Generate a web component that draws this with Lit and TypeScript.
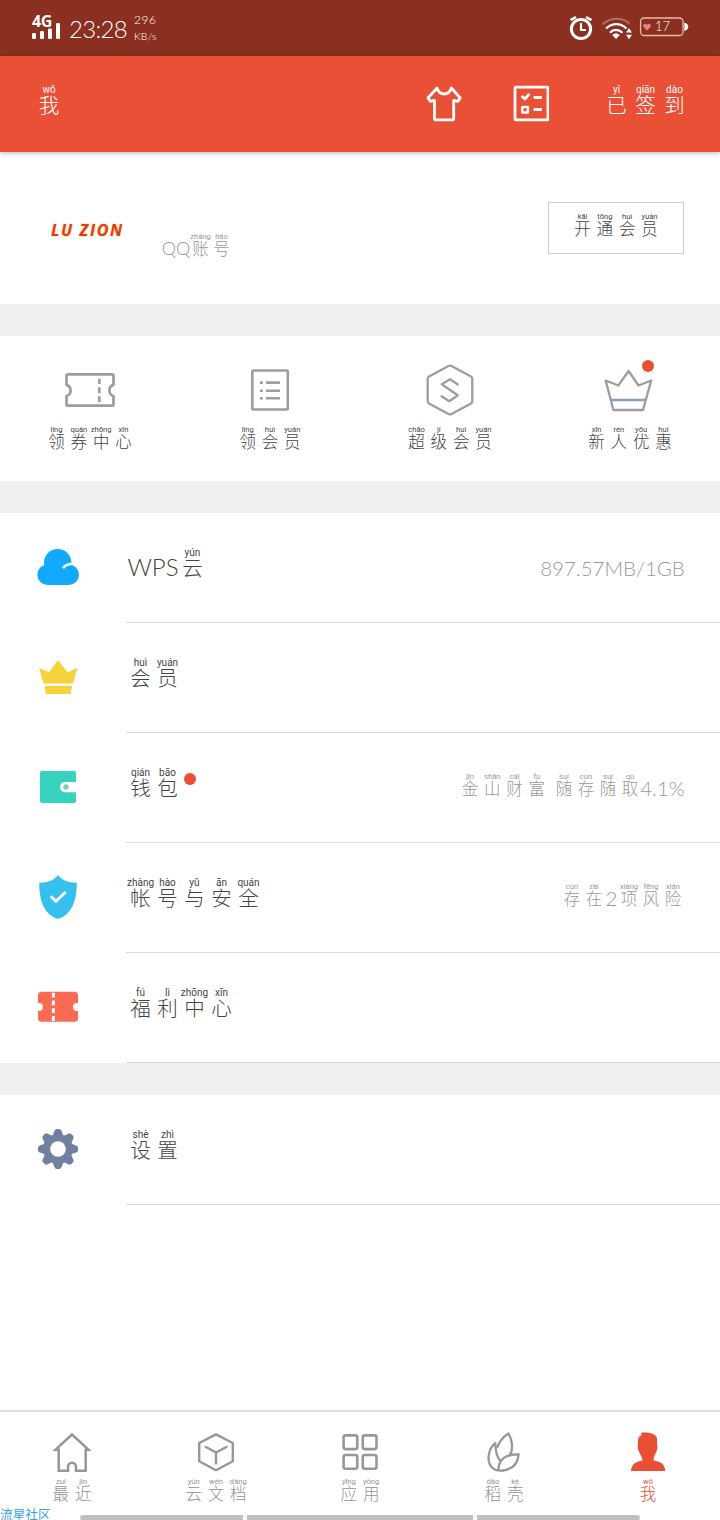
import { LitElement, html, css, svg, nothing } from "lit";
import { customElement, property } from "lit/decorators.js";

// [text, pinyin, advance in px]
type Cell = [string, string, number];
type Size = "lg" | "sm";

const han = (chars: string, pinyin: string, step: number): Cell[] => {
  const py = pinyin.split(" ");
  return [...chars].map((c, i) => [c, py[i] ?? "", step] as Cell);
};

const icon = (x: number, y: number, w: number, h: number, body: unknown) =>
  html`<svg width=${w} height=${h} viewBox="${x} ${y} ${w} ${h}" fill="none"
    stroke-linejoin="round" stroke-linecap="butt">${body}</svg>`;

@customElement("pinyin-text")
class PinyinText extends LitElement {
  @property({ attribute: false }) cells: Cell[] = [];
  @property({ reflect: true }) size: Size = "lg";

  static styles = css`
    :host { display: flex; white-space: nowrap; }
    .cell { display: flex; flex-direction: column; align-items: center; }
    .py { font: 400 10px/10px Roboto, sans-serif; height: 10px; }
    .ch { font: 300 20.5px/21px Lato, "Noto Sans CJK SC", sans-serif; height: 21px; }
    .latin { font-size: 24px; line-height: 18px; }
    :host([size="sm"]) .py { font-size: 7.6px; line-height: 8px; height: 8px; }
    :host([size="sm"]) .ch { font-size: 16.5px; line-height: 17px; height: 17px; }
    :host([size="sm"]) .latin { font-size: 20.5px; line-height: 15px; }
    :host(.account) .latin { font-size: 18px !important; line-height: 14px !important; }
  `;

  render() {
    return this.cells.map(([t, p, w]) => html`
      <span class="cell" style="width:${w}px">
        <span class="py">${p}</span>
        <span class="ch ${p ? "" : "latin"}">${t}</span>
      </span>`);
  }
}

const G = "#9d9da1";
const N = "#979797";
const R = "#e94f35";

const icons = {
  signal: icon(31, 22, 30, 18, svg`<g fill="#fff">
    <rect x="32" y="33" width="4" height="6" rx="1.2"/><rect x="40" y="31" width="4" height="8" rx="1.2"/>
    <rect x="48" y="28.5" width="4" height="10.5" rx="1.2"/><rect x="56" y="23" width="4" height="16" rx="1.2"/></g>`),
  alarm: icon(568, 14, 26, 28, svg`<g stroke="#fff" stroke-width="3">
    <circle cx="581" cy="29" r="9.6"/><path d="M581 23V30H586" stroke-width="2.2"/>
    <path d="M570.6 20.2L576 17M591.4 20.2L586 17" stroke-width="2.6"/></g>`),
  wifi: icon(600, 14, 32, 28, svg`<g stroke="#fff" stroke-width="2.2">
    <path d="M601.5 24.5C609 17 621 17 628.5 23.5" opacity=".3"/>
    <path d="M605 28.5C611 22.6 619.5 22.6 625.5 28.5"/><path d="M609 32.8C612.5 29 617.5 29 621.5 32.8"/>
    <path d="M611.2 35Q615 31.5 618.8 35L615 39Z" fill="#fff" stroke="none"/>
    <path d="M625 32.6L628 28L631 32.6ZM625 34.7L628 39.3L631 34.7Z" fill="#fff" stroke="none"/></g>`),
  battery: icon(639, 15, 50, 24, svg`<rect x="640.6" y="19" width="42.4" height="17.5" rx="3.5" stroke="#f3b5a5" stroke-width="1.3"/>
    <path d="M684.3 23.5Q688.3 25 688.3 27.7T684.3 32Z" fill="#fff"/>
    <path d="M647 31.5L643.5 28C642 25.5 645.5 23.5 647 26C648.5 23.5 652 25.5 650.5 28Z" fill="#e6808a"/>
    <text x="655" y="32.3" font-family="Lato, sans-serif" font-weight="300" font-size="13" fill="#fff">17</text>`),
  shirt: icon(425, 85, 37, 39, svg`<path d="M437 88L428 98L430.3 101.3L434.5 100.3V118.4Q434.5 119.8 436 119.8H452.2Q453.7 119.8 453.7 118.4V100.3L457.9 101.3L460.2 98L451.3 88C450 92 447.6 94 444.2 94S438.4 92 437 88Z" stroke="#fff" stroke-width="2.8"/>`),
  tasks: icon(512, 85, 37, 39, svg`<g stroke="#fff" stroke-width="2.8"><rect x="515" y="87.2" width="33" height="32.6" rx=".8"/>
    <path d="M521.7 96L524.9 99L529.3 94"/><path d="M533.6 97.5H541.9M533.6 109.5H541.9"/>
    <rect x="522.2" y="106.9" width="5.7" height="5.7" rx=".4" stroke-width="2.5"/></g>`),
  coupon: icon(64, 364, 52, 52, svg`<g stroke=${G} stroke-width="2.7"><path d="M68 374.4H112Q113.5 374.4 113.5 375.9V384.9A5.8 5.8 0 0 0 113.5 396V404.2Q113.5 405.7 112 405.7H68Q66.5 405.7 66.5 404.2V396A5.8 5.8 0 0 0 66.5 384.9V375.9Q66.5 374.4 68 374.4Z"/>
    <path d="M99.3 378.8V384M99.3 387.3V393.3M99.3 396.3V402"/></g>`),
  list: icon(244, 364, 52, 52, svg`<g stroke=${G} stroke-width="2.6"><rect x="252.3" y="370.5" width="35.5" height="39" rx="1"/>
    <path d="M260 382.6H262.8M260 390.7H262.8M260 398.2H262.8M266 382.6H280M266 390.7H280M266 398.2H280"/></g>`),
  hex: icon(424, 364, 52, 52, svg`<g stroke=${G} stroke-width="2.3"><path d="M448.5 366.1Q450 365.3 451.5 366.1L471 376.6Q472.3 377.4 472.3 379V401Q472.3 402.6 471 403.4L451.5 413.9Q450 414.7 448.5 413.9L429 403.4Q427.7 402.6 427.7 401V379Q427.7 377.4 429 376.6Z"/>
    <path d="M458.5 385L450 379.3L441.7 384.3L457.8 395.2L449.3 401.2L440.8 395.8"/></g>`),
  crown: icon(604, 364, 52, 52, svg`<g stroke=${G} stroke-width="2.3"><path d="M605.7 380.5L618.3 385.5L628.6 371L638.5 385.5L651.2 380.5L643 410H613.4Z"/><path d="M611 400H646" stroke="#8f9bbd"/></g>`),
  cloud: icon(36, 545, 44, 44, svg`<g fill="#12aaff"><circle cx="57.7" cy="562.7" r="13.7"/><rect x="37.3" y="564.5" width="41.7" height="20.5" rx="10.25"/></g>
    <path d="M63 568.3Q66 563.8 72 564" stroke="#fff" stroke-width="2.5"/>`),
  vip: icon(36, 655, 44, 44, svg`<path d="M39 667.7L49 672.2L58 660L67.7 672.2L77.5 667.7L73 683.4H43.5ZM44.2 686H72.2L70.5 694H45.9Z" fill="#f6d33c"/>`),
  wallet: icon(36, 765, 44, 44, svg`<path d="M42 771H74Q76 771 76 773V782H65A5 5 0 0 0 65 792.2H76V801Q76 803 74 803H42Q40 803 40 801V773Q40 771 42 771Z" fill="#36d3be"/><circle cx="66" cy="787" r="2.7" fill="#7ccbb6"/>`),
  shield: icon(36, 875, 44, 44, svg`<path d="M58 875C54.5 880 48 882.8 39.3 882.7C39 900 44 914.5 58 919C72 914.5 77 900 76.7 882.7C68 882.8 61.5 880 58 875Z" fill="#36c0ee"/><path d="M50.7 896.3L56 901.3L65.7 892" stroke="#fff" stroke-width="2.8" stroke-linejoin="miter"/>`),
  ticket: icon(36, 985, 44, 44, svg`<path d="M41.5 991.7H74.5Q78 991.7 78 995.2V1003H77A4 4 0 0 0 77 1011H78V1018.2Q78 1021.7 74.5 1021.7H41.5Q38 1021.7 38 1018.2V1011H39A4 4 0 0 0 39 1003H38V995.2Q38 991.7 41.5 991.7Z" fill="#fb6b53"/>
    <path d="M53.4 992.7V1021" stroke="#fff" stroke-width="3" stroke-dasharray="4.8 3"/>`),
  gear: icon(36, 1127, 44, 44, svg`<g fill="#7080a0" transform="translate(58 1149)"><circle r="14"/>
    ${[0, 45, 90, 135, 180, 225, 270, 315].map((a) => svg`<path transform="rotate(${a})" d="M-7 -12Q-4.4 -14 -3.8 -17.5Q-3.2 -20 -1.2 -20H1.2Q3.2 -20 3.8 -17.5Q4.4 -14 7 -12Z"/>`)}
    <circle r="7.8" fill="#fff"/></g>`),
  home: icon(50, 1430, 44, 44, svg`<path d="M72 1434.500L55.500 1449.700H58.700V1470.700H68V1466.700A4 4 0 0 1 76 1466.700V1470.700H85.700V1449.700H88.500Z" stroke=${N} stroke-width="2.500" stroke-linejoin="miter"/>`),
  cube: icon(194, 1430, 44, 44, svg`<path d="M216 1434.4L232.8 1443V1461.2L216 1470.3L199.2 1461.2V1443ZM205 1446.5L216 1452.5L227.3 1446.5M216 1452.5V1464.5" stroke=${N} stroke-width="2.4"/>`),
  apps: icon(338, 1430, 44, 44, svg`<g stroke=${N} stroke-width="2.6">
    <rect x="343.6" y="1435.4" width="13.7" height="13.7" rx="2"/><rect x="362.8" y="1435.4" width="13.7" height="13.7" rx="2"/>
    <rect x="343.6" y="1455" width="13.7" height="13.7" rx="2"/><rect x="362.8" y="1455" width="13.7" height="13.7" rx="2"/></g>`),
  leaf: icon(482, 1430, 44, 44, svg`<g stroke=${N} stroke-width="2.3"><path d="M497 1448C499 1442 503 1437 508.5 1433.5C512.5 1440 513.5 1450 509.5 1456"/>
    <path d="M500 1460.5C496 1456 495.5 1450 495.3 1443.2C488 1449 486 1462 492.5 1468C495.5 1470.6 499 1471 503 1470.5C513 1469 518 1462.5 518.6 1454.3C506 1454 498 1459.5 498.5 1470.5"/></g>`),
  me: icon(626, 1430, 44, 44, svg`<path d="M641 1432.7C648 1432 655.5 1433.2 657 1438C657.3 1441 656.8 1444 657.5 1447C657.3 1450 656.3 1452 655.2 1454C654 1457 653.5 1458.5 653.5 1460.3C660 1462.2 664.7 1463 665.2 1471H631C631.5 1463 637 1462.2 642.5 1460.3C642.5 1458 640.5 1456 639.5 1452.5C637.5 1450 637.5 1447 638 1444C637.8 1440 637.5 1436.5 641.5 1435.5Z" fill=${R}/>`),
};

interface Row { icon: unknown; label: Cell[]; value?: Cell[]; dot?: boolean; }

const rows: Row[] = [
  { icon: icons.cloud, label: [["WPS", "", 52], ["云", "yún", 27]], value: [["897.57MB/1GB", "", 143]] },
  { icon: icons.vip, label: han("会员", "huì yuán", 27) },
  { icon: icons.wallet, label: han("钱包", "qián bāo", 27), dot: true,
    value: [...han("金山财富", "jīn shān cái fù", 22.3), [" ", "", 5], ...han("随存随取", "suí cún suí qǔ", 22), ["4.1%", "", 43]] },
  { icon: icons.shield, label: han("帐号与安全", "zhàng hào yǔ ān quán", 27),
    value: [...han("存在", "cún zài", 22), ["2", "", 13], ...han("项风险", "xiàng fēng xiǎn", 22)] },
  { icon: icons.ticket, label: han("福利中心", "fú lì zhōng xīn", 27) },
];

const settings: Row = { icon: icons.gear, label: han("设置", "shè zhì", 27) };

const shortcuts = [
  { icon: icons.coupon, label: han("领券中心", "lǐng quàn zhōng xīn", 22.3) },
  { icon: icons.list, label: han("领会员", "lǐng huì yuán", 22.3) },
  { icon: icons.hex, label: han("超级会员", "chāo jí huì yuán", 22.3) },
  { icon: icons.crown, label: han("新人优惠", "xīn rén yōu huì", 22.3), dot: true },
];

const tabs = [
  { icon: icons.home, label: han("最近", "zuì jìn", 22.3) },
  { icon: icons.cube, label: han("云文档", "yún wén dàng", 22.3) },
  { icon: icons.apps, label: han("应用", "yīng yòng", 22.3) },
  { icon: icons.leaf, label: han("稻壳", "dào ké", 22.3) },
  { icon: icons.me, label: han("我", "wǒ", 22.3), active: true },
];

@customElement("app-root")
class AppRoot extends LitElement {
  static styles = css`
    :host { display: flex; flex-direction: column; position: relative; width: 720px; height: 1520px;
      background: #fff; color: #444; overflow: hidden; font-family: Lato, "Noto Sans CJK SC", sans-serif; }
    * { box-sizing: border-box; }
    svg { display: block; flex: none; }
    .status { display: flex; height: 56px; background: #8b3020; color: #fff; padding: 14px 31px 0; }
    .net { display: flex; flex-direction: column; width: 30px; }
    .g4 { font: 700 16px/14px "Open Sans", sans-serif; height: 8px; letter-spacing: -.5px; padding-left: 1px; }
    .clock { margin-left: 8px; font-weight: 300; font-size: 24px; line-height: 29px; width: 59px; white-space: nowrap; letter-spacing: -.7px; }
    .rate { display: flex; flex-direction: column; margin-left: 6px; font-weight: 300; font-size: 12px; line-height: 16px; margin-top: -2px; letter-spacing: .6px; }
    .rate .unit { font-size: 10.5px; letter-spacing: .2px; }
    .sys { display: flex; margin-left: auto; gap: 6.5px; }
    .header { display: flex; align-items: center; height: 96px; flex: none; background: #e95036; color: #fff;
      padding: 0 31px 0 36px; box-shadow: 0 1px 5px rgba(0,0,0,.3); z-index: 1; }
    .title { margin-top: -8px; }
    .shirt { margin-left: auto; margin-right: 50px; }
    .signed { margin-left: 53px; margin-top: -7px; }
    .profile { display: flex; height: 152px; padding: 50px 36px 0 51px; align-items: flex-start; }
    .name { font: italic 700 16px/20px "Open Sans", Lato, sans-serif; color: #df3d16; width: 111px; margin-top: 18px;
      letter-spacing: 1.7px; white-space: nowrap; text-shadow: 0 0 2px #ffb54a; }
    .account { color: #999; margin-top: 31px; }
    .join { margin-left: auto; width: 136px; height: 52px; border: 1px solid #ccc; display: flex; justify-content: center; padding-top: 10px; }
    .gap { height: 32px; background: #f0f0f0; flex: none; }
    .shortcuts { display: grid; grid-template-columns: repeat(4, 180px); height: 145px; padding-top: 28px; }
    .short { display: flex; flex-direction: column; align-items: center; gap: 10px; position: relative; }
    .dot { width: 12px; height: 12px; border-radius: 50%; background: #e94f35; }
    .short .dot { position: absolute; left: 102px; top: -4px; }
    .row { display: flex; height: 110px; padding-left: 36px; }
    .row svg { margin-top: 32px; }
    .main { display: flex; flex: 1; margin-left: 46px; border-bottom: 1px solid #d9d9d9; padding: 35px 36px 0 1px; }
    .main .dot { margin: 5px 0 0 3px; }
    .value { margin-left: auto; margin-top: 5px; color: #999; }
    .tabs { display: grid; grid-template-columns: repeat(5, 144px); height: 110px; margin-top: auto; border-top: 2px solid #ddd; padding-top: 18px; }
    .tab { display: flex; flex-direction: column; align-items: center; gap: 4px; color: #939393; }
    .tab.active { color: #e94f35; }
    .gestures { position: absolute; left: 80px; bottom: 0; display: flex; gap: 4px; }
    .bar { width: 163px; height: 5px; background: #c0c0c0; border-radius: 3px 0 0 2px; }
    .bar.mid { width: 226px; border-radius: 0; }
    .bar.end { border-radius: 0 3px 2px 0; }
    .mark { position: absolute; left: 0; bottom: 0; font: 400 12.7px/13px "Noto Sans CJK SC", sans-serif; color: #3b9fe9; }
  `;

  private row(r: Row) {
    return html`<div class="row">${r.icon}
      <div class="main">
        <pinyin-text .cells=${r.label}></pinyin-text>
        ${r.dot ? html`<i class="dot"></i>` : nothing}
        ${r.value ? html`<pinyin-text class="value" size="sm" .cells=${r.value}></pinyin-text>` : nothing}
      </div></div>`;
  }

  render() {
    return html`
      <div class="status">
        <div class="net"><span class="g4">4G</span>${icons.signal}</div>
        <span class="clock">23:28</span>
        <div class="rate"><span>296</span><span class="unit">KB/s</span></div>
        <div class="sys">${icons.alarm}${icons.wifi}${icons.battery}</div>
      </div>
      <div class="header">
        <pinyin-text class="title" .cells=${han("我", "wǒ", 26)}></pinyin-text>
        <span class="shirt">${icons.shirt}</span>${icons.tasks}
        <pinyin-text class="signed" .cells=${han("已签到", "yǐ qiān dào", 29)}></pinyin-text>
      </div>
      <div class="profile">
        <span class="name">LU ZION</span>
        <pinyin-text class="account" size="sm" .cells=${[["QQ", "", 28], ...han("账号", "zhàng hào", 21)] as Cell[]}></pinyin-text>
        <div class="join"><pinyin-text size="sm" .cells=${han("开通会员", "kāi tōng huì yuán", 22.3)}></pinyin-text></div>
      </div>
      <div class="gap"></div>
      <div class="shortcuts">${shortcuts.map((s) => html`<div class="short">${s.icon}
        <pinyin-text size="sm" .cells=${s.label}></pinyin-text>${s.dot ? html`<i class="dot"></i>` : nothing}</div>`)}</div>
      <div class="gap"></div>
      <div>${rows.map((r) => this.row(r))}</div>
      <div class="gap"></div>
      ${this.row(settings)}
      <div class="tabs">${tabs.map((t) => html`<div class="tab ${t.active ? "active" : ""}">${t.icon}
        <pinyin-text size="sm" .cells=${t.label}></pinyin-text></div>`)}</div>
      <div class="gestures"><i class="bar"></i><i class="bar mid"></i><i class="bar end"></i></div>
      <span class="mark">流星社区</span>`;
  }
}
